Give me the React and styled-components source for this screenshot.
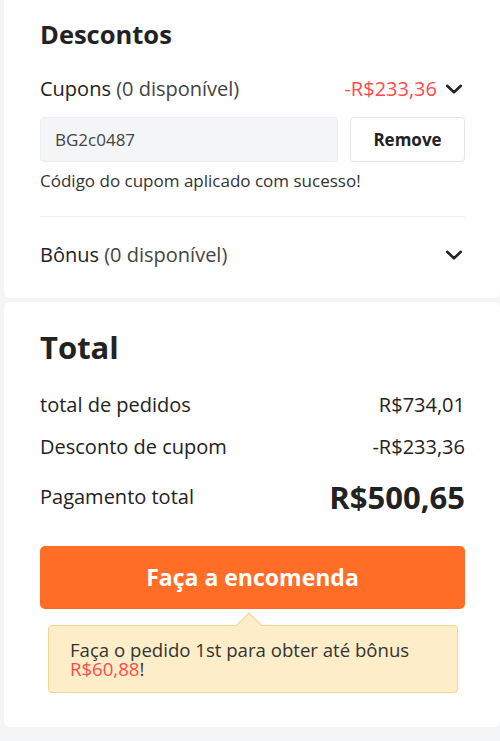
import React from "react";
import styled, { createGlobalStyle } from "styled-components";

const Global = createGlobalStyle`
  html, body { margin: 0; padding: 0; }
  body {
    background: #f4f5f7;
    font-family: "Open Sans", "Noto Sans", sans-serif;
    color: #222;
    -webkit-font-smoothing: antialiased;
  }
`;

const Page = styled.div`
  display: flex;
  flex-direction: column;
  gap: 4px;
  padding: 0 0 14px 4px;
  width: 496px;
`;

const Card = styled.section`
  background: #fff;
  border-radius: ${(p) => (p.$flatTop ? "0 0 6px 6px" : "6px")};
  padding: ${(p) => p.$pad};
  display: flex;
  flex-direction: column;
`;

const Heading = styled.h2`
  margin: 0;
  font-size: ${(p) => p.$size};
  font-weight: 700;
  color: #222;
  line-height: 1.2;
`;

const Row = styled.div`
  display: flex;
  align-items: center;
  justify-content: space-between;
  height: ${(p) => p.$h || "30px"};
  margin-top: ${(p) => p.$mt || "0"};
`;

const Label = styled.span`
  font-size: 20px;
  color: #222;
`;

const Muted = styled.span`
  color: #444;
`;

const RightGroup = styled.div`
  display: flex;
  align-items: center;
  gap: 6px;
`;

const RedAmount = styled.span`
  font-size: 20px;
  color: #ff4a4a;
`;

const Chevron = () => (
  <svg width="22" height="22" viewBox="0 0 24 24" fill="none">
    <path d="M4.5 8.5 L12 15.5 L19.5 8.5" stroke="#222" strokeWidth="2.8" strokeLinecap="round" strokeLinejoin="round" />
  </svg>
);

const CouponRow = styled.div`
  display: flex;
  gap: 12px;
  margin-top: 13px;
`;

const CodeBox = styled.div`
  flex: 1;
  height: 45px;
  box-sizing: border-box;
  background: #f4f5f7;
  border: 1px solid #eceef1;
  border-radius: 4px;
  display: flex;
  align-items: center;
  padding-left: 14px;
  font-size: 17px;
  color: #444;
`;

const RemoveButton = styled.button`
  width: 115px;
  height: 45px;
  box-sizing: border-box;
  background: #fff;
  border: 1px solid #e3e5e9;
  border-radius: 4px;
  font-family: inherit;
  font-size: 17px;
  font-weight: 700;
  color: #222;
`;

const Success = styled.p`
  margin: 7.5px 0 0;
  font-size: 17px;
  line-height: 23px;
  color: #333;
`;

const Divider = styled.hr`
  border: 0;
  border-top: 1px solid #eef0f2;
  margin: 23.5px 0 0;
`;

const Value = styled.span`
  font-size: ${(p) => p.$size || "20px"};
  font-weight: ${(p) => p.$weight || 400};
  color: #222;
`;

const OrderButton = styled.button`
  margin-top: 29px;
  height: 63px;
  width: 100%;
  border: 0;
  border-radius: 5px;
  background: #ff6d26;
  color: #fff;
  font-family: inherit;
  font-size: 23px;
  font-weight: 700;
`;

const Tip = styled.div`
  position: relative;
  margin: 16px 7px 0 8px;
  background: #fdeec9;
  border: 1.5px solid #f3d78f;
  border-radius: 4px;
  padding: 14px 16px 14px 21px;
  font-size: 18.6px;
  line-height: 19px;
  color: #333;

  &::before {
    content: "";
    position: absolute;
    left: 191px;
    top: -9.6px;
    width: 17px;
    height: 17px;
    background: #fdeec9;
    border-left: 1.5px solid #f3d78f;
    border-top: 1.5px solid #f3d78f;
    transform: rotate(45deg);
  }
`;

const TipLine = styled.span`
  display: block;
`;

const Red = styled.span`
  color: #ff4a4a;
`;

export default function App() {
  return (
    <>
      <Global />
      <Page>
        <Card $flatTop $pad="19px 35px 28px 36px">
          <Heading $size="25.5px">Descontos</Heading>
          <Row $mt="24px">
            <Label>
              Cupons <Muted>(0 disponível)</Muted>
            </Label>
            <RightGroup>
              <RedAmount>-R$233,36</RedAmount>
              <Chevron />
            </RightGroup>
          </Row>
          <CouponRow>
            <CodeBox>BG2c0487</CodeBox>
            <RemoveButton>Remove</RemoveButton>
          </CouponRow>
          <Success>Código do cupom aplicado com sucesso!</Success>
          <Divider />
          <Row $mt="23px">
            <Label>
              Bônus <Muted>(0 disponível)</Muted>
            </Label>
            <Chevron />
          </Row>
        </Card>
        <Card $pad="27px 35px 34px 36px">
          <Heading $size="31px">Total</Heading>
          <Row $mt="24px">
            <Label>total de pedidos</Label>
            <Value>R$734,01</Value>
          </Row>
          <Row $mt="12px">
            <Label>Desconto de cupom</Label>
            <Value>-R$233,36</Value>
          </Row>
          <Row $h="40px" $mt="15px">
            <Label>Pagamento total</Label>
            <Value $size="31px" $weight={700}>R$500,65</Value>
          </Row>
          <OrderButton>Faça a encomenda</OrderButton>
          <Tip>
            <TipLine>Faça o pedido 1st para obter até bônus</TipLine>
            <TipLine>
              <Red>R$60,88</Red>!
            </TipLine>
          </Tip>
        </Card>
      </Page>
    </>
  );
}
